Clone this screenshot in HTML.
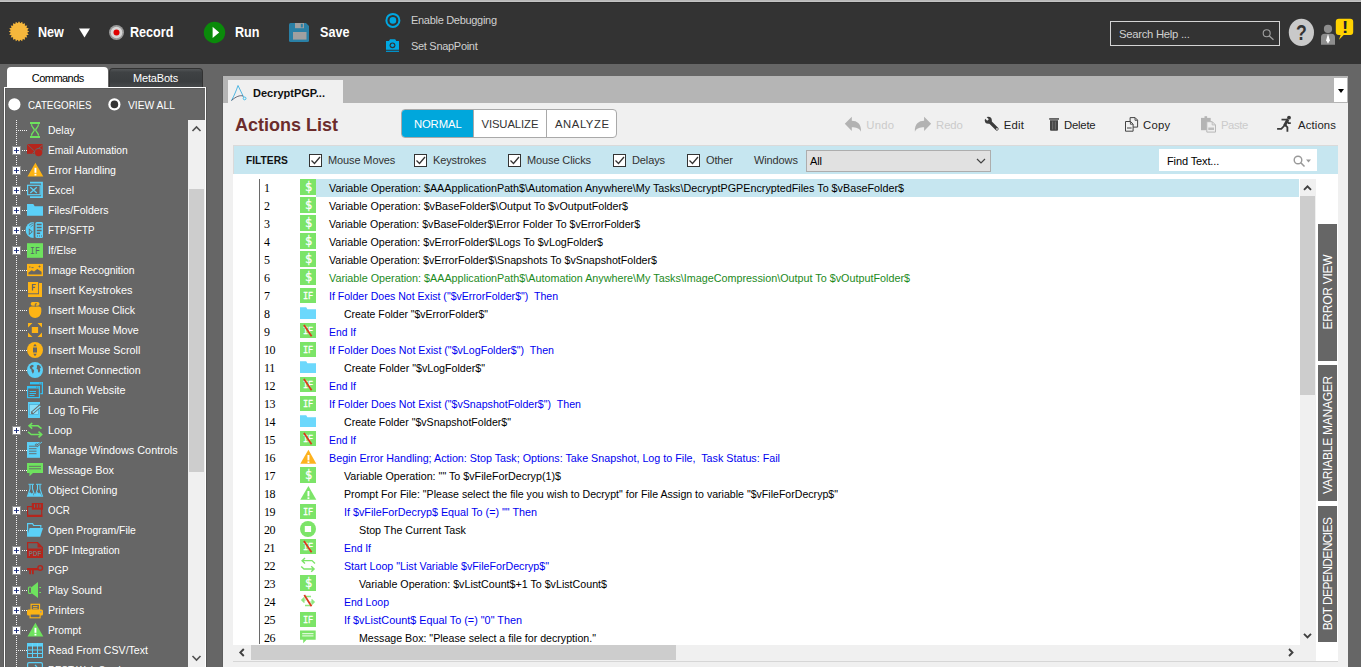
<!DOCTYPE html><html><head><meta charset="utf-8"><title>Automation Anywhere Workbench</title><style>
*{box-sizing:border-box;margin:0;padding:0}
html,body{width:1361px;height:667px;overflow:hidden;background:#666;font-family:"Liberation Sans",sans-serif;}
.a{position:absolute}
#top0{left:0;top:0;width:1361px;height:2px;background:linear-gradient(#b8b8b8 50%,#c4c4c4 50%)}
#bar{left:0;top:2px;width:1361px;height:62px;background:#333;border-top:1px solid #2a2a2a}
.tb{color:#fff;font-weight:bold;font-size:14px;line-height:16px;white-space:nowrap;transform:scaleX(0.9);transform-origin:0 0}
.ts{color:#d0d0d0;font-size:11px;line-height:14px;white-space:nowrap;letter-spacing:-0.3px}
#main{left:223px;top:76px;width:1125px;height:591px;background:#f0f0f0}
#strip{left:223px;top:76px;width:1125px;height:27px;background:#b5b5b5}
#tab{left:228px;top:80px;width:115px;height:23px;background:#f0f0f0}
#tabt{left:253px;top:86.700px;font-size:11px;font-weight:bold;color:#111;line-height:13px;white-space:nowrap}
#dd{left:1334px;top:78px;width:13px;height:24px;background:#fff}
#title{left:235px;top:114px;font-size:18px;font-weight:bold;color:#6b2c2c;line-height:22px;white-space:nowrap}
#seg{left:401px;top:109px;width:216px;height:29px;border:1px solid #a9a9a9;border-radius:4px;background:#fff;overflow:hidden}
.sg{top:0;height:27px;font-size:11.3px;line-height:28px;letter-spacing:-0.1px;text-align:center;color:#333;white-space:nowrap}
.act{font-size:11.3px;line-height:16px;color:#222;white-space:nowrap}
.dis{color:#cbcbcb}
#filt{left:233px;top:145px;width:1105px;height:29px;background:#c6e6f0;border-top:1px solid #dadada;border-left:1px solid #dadada}
.fl{font-size:11px;line-height:13px;color:#333;white-space:nowrap;letter-spacing:-0.12px}
.cb{width:13px;height:13px;background:#fff;border:1px solid #333}
#wrap{left:233px;top:174px;width:1105px;height:487px;background:#fff;border-left:1px solid #dadada}
#list{left:233px;top:174px;width:1067px;height:471px;background:#fff;overflow:hidden}
.row{left:0;height:18px;width:1084px}
.num{left:31px;top:0px;font-family:"Liberation Serif",serif;font-size:12px;letter-spacing:-0.4px;line-height:18px;color:#000}
.ic{left:67px;top:0;width:16px;height:16px}
.tx{top:0px;font-size:11.8px;line-height:18px;white-space:pre;transform-origin:0 0}
.k{color:#000}.b{color:#0000f0}.g{color:#1c8a1c}
#left{left:4px;top:87px;width:202px;height:580px;background:#666;border:1px solid #fff;border-bottom:none}
.ti{left:48px;font-size:11.5px;line-height:16px;color:#fff;white-space:nowrap;transform-origin:0 0}
.tic{left:27px;width:16px;height:16px}
.tic svg{display:block}
.exp{left:12px;width:9px;height:9px;background:#fff;border:1px solid #929292}
.side{left:1318.300px;width:18.900px;background:#666;color:#fff}
.side span{position:absolute;left:9.800px;white-space:nowrap;font-size:12px;line-height:14px;transform:translate(-50%,-50%) rotate(-90deg)}
</style></head><body>
<div class="a" id="top0"></div><div class="a" id="bar"></div>
<svg class="a" style="left:0;top:0" width="420" height="64"><polygon points="29.20,31.50 27.20,32.80 28.70,34.65 26.40,35.27 27.25,37.50 24.87,37.37 25.00,39.75 22.77,38.90 22.15,41.20 20.30,39.70 19.00,41.70 17.70,39.70 15.85,41.20 15.23,38.90 13.00,39.75 13.13,37.37 10.75,37.50 11.60,35.27 9.30,34.65 10.80,32.80 8.80,31.50 10.80,30.20 9.30,28.35 11.60,27.73 10.75,25.50 13.13,25.63 13.00,23.25 15.23,24.10 15.85,21.80 17.70,23.30 19.00,21.30 20.30,23.30 22.15,21.80 22.77,24.10 25.00,23.25 24.87,25.63 27.25,25.50 26.40,27.73 28.70,28.35 27.20,30.20" fill="#f6b73c"/>
<polygon points="79,28.500 90,28.500 84.500,37.500" fill="#fff"/>
<circle cx="116.500" cy="32.500" r="7.500" fill="#9a9a9a"/><circle cx="116.500" cy="32.500" r="5.800" fill="#d6d6d6"/><circle cx="116.500" cy="32.500" r="3" fill="#e00000"/>
<circle cx="214.500" cy="32.500" r="10.700" fill="#0a8a0a"/><polygon points="212.600,26.800 212.600,38 219.200,32.400" fill="#fff"/>
<path d="M290.500 23h15.500l3 3v14.500a1.500 1.500 0 0 1-1.500 1.500h-17a1.500 1.500 0 0 1-1.500-1.500v-16a1.500 1.500 0 0 1 1.500-1.500z" fill="#2a80a6"/><rect x="295" y="23" width="9" height="5.200" fill="#a0a0a0"/><rect x="300.800" y="23.800" width="2" height="3.600" fill="#2a80a6"/><rect x="293" y="32" width="13.500" height="7.600" fill="#a0a0a0"/>
<circle cx="392.900" cy="20.400" r="6.500" fill="none" stroke="#00a8e2" stroke-width="2"/><circle cx="392.900" cy="20.400" r="3.300" fill="#00a8e2"/>
<path d="M386 41h3l1-1.700h5.200l1 1.700H399v8.800H386z" fill="#00a8e2"/><rect x="386" y="50.700" width="13" height="1.300" fill="#0090c8"/><circle cx="392.500" cy="45.300" r="2.900" fill="#333"/><circle cx="392.500" cy="45.300" r="1.700" fill="#00a8e2"/>
</svg>
<div class="a tb" style="left:38px;top:24.300px">New</div>
<div class="a tb" style="left:130px;top:24.300px">Record</div>
<div class="a tb" style="left:235px;top:24.300px">Run</div>
<div class="a tb" style="left:320px;top:24.300px">Save</div>
<div class="a ts" style="left:411px;top:13px">Enable Debugging</div>
<div class="a ts" style="left:411px;top:39px">Set SnapPoint</div>
<div class="a" style="left:1110px;top:21px;width:170px;height:25px;border:1px solid #d4d4d4;background:#333"></div>
<div class="a ts" style="left:1119px;top:27px;font-size:11.300px;letter-spacing:-0.280px">Search Help ...</div>
<svg class="a" style="left:1240px;top:8px" width="121" height="50"><circle cx="26.700" cy="25.300" r="3.500" fill="none" stroke="#a0a0a0" stroke-width="1.100"/><path d="M29.300 27.900L33.500 31.800" stroke="#a0a0a0" stroke-width="1.300"/><ellipse cx="61.400" cy="24.400" rx="12.600" ry="13.600" fill="#c9c9c9"/><circle cx="88" cy="20.900" r="4.100" fill="#8e8e8e"/><path d="M81 36.800v-7.500a3.500 3.500 0 0 1 3.500-3.500h7a3.500 3.500 0 0 1 3.500 3.500v7.500z" fill="#8e8e8e"/><path d="M88 26l1.900 6.200-1.900 3.600-1.900-3.600z" fill="#fff"/><path d="M98.800 10.800h11.400a3 3 0 0 1 3 3v10.200a3 3 0 0 1-3 3h-6.500l-4.700 4.800 1.600-4.800h-1.800a3 3 0 0 1-3-3v-10.200a3 3 0 0 1 3-3z" fill="#ffd200"/></svg>
<div class="a" style="left:1339.500px;top:19.800px;width:10px;height:16px;color:#1c2030;font-weight:bold;font-size:16px;line-height:16px;text-align:center;transform:scaleX(1.150)">!</div>
<div class="a" style="left:1291px;top:19.500px;width:21px;height:26px;color:#333;font-weight:bold;font-size:22px;line-height:26px;text-align:center;transform:scaleX(0.800)">?</div>
<div class="a" style="left:7px;top:67px;width:101px;height:21px;background:#fff;border-radius:4px 4px 0 0"></div>
<div class="a" style="left:109px;top:68px;width:94px;height:19px;background:linear-gradient(#525557 0,#3f4244 18%,#3a3d3f 70%,#46494b);border-radius:4px 4px 0 0;border:1px solid #323232;border-bottom:none"></div>
<div class="a" id="left"></div>
<div class="a" style="left:3px;top:88px;width:1px;height:579px;background:#5b5b5b"></div><div class="a" style="left:206px;top:87px;width:1px;height:580px;background:#565656"></div><div class="a" style="left:5px;top:88px;width:200px;height:1px;background:#5b5b5b"></div><div class="a" style="left:5px;top:88px;width:1px;height:579px;background:#5b5b5b"></div><div class="a" style="left:222px;top:76px;width:1px;height:591px;background:#5e5e5e"></div>
<div class="a" style="left:7px;top:72px;width:101px;text-align:center;font-size:11px;line-height:13px;color:#000;letter-spacing:-0.550px;text-indent:0.500px">Commands</div>
<div class="a" style="left:109px;top:72px;width:93px;text-align:center;font-size:11px;line-height:13px;color:#fff;letter-spacing:-0.180px">MetaBots</div>
<svg class="a" style="left:0;top:90px" width="130" height="30"><circle cx="14.400" cy="14.400" r="6.100" fill="#fff"/><circle cx="114.400" cy="14.400" r="6.100" fill="#fff"/><circle cx="114.400" cy="14.400" r="3.800" fill="#333"/></svg>
<div class="a ti" style="left:27.500px;top:97px;font-size:11.300px;transform:scaleX(0.867)">CATEGORIES</div>
<div class="a ti" style="left:127.500px;top:97px;font-size:11.300px;transform:scaleX(0.912)">VIEW ALL</div>
<div class="a" style="left:188px;top:120px;width:17px;height:547px;background:#f0f0f0"></div>
<div class="a" style="left:189px;top:189px;width:15px;height:283px;background:#cdcdcd"></div>
<svg class="a" style="left:188px;top:120px" width="17" height="17"><path d="M4.500 11L8.500 7l4 4" fill="none" stroke="#505050" stroke-width="1.6"/></svg>
<svg class="a" style="left:188px;top:650px" width="17" height="17"><path d="M4.500 6L8.500 10l4-4" fill="none" stroke="#505050" stroke-width="1.6"/></svg>
<div class="a" style="left:16px;top:120px;width:1px;height:547px;background:repeating-linear-gradient(#f4f4f4 0 1px,transparent 1px 2px)"></div>
<div class="a" style="left:18px;top:130px;width:9px;height:1px;background:repeating-linear-gradient(90deg,#f4f4f4 0 1px,transparent 1px 2px)"></div>
<div class="a tic" style="top:122px"><svg width="17" height="16" viewBox="0 0 17 16" style="overflow:visible"><rect x="3" y="0" width="10" height="2" fill="#6ee25e"/><rect x="3" y="14" width="10" height="2" fill="#6ee25e"/><path d="M4.500 2.200C4.500 5.500 7.300 6.200 7.300 8S4.500 10.500 4.500 13.800M11.500 2.200C11.500 5.500 8.700 6.200 8.700 8S11.500 10.500 11.500 13.800" fill="none" stroke="#6ee25e" stroke-width="1.300"/></svg></div>
<div class="a ti" style="top:122px;transform:scaleX(0.9080)">Delay</div>
<div class="a" style="left:22px;top:150px;width:5px;height:1px;background:repeating-linear-gradient(90deg,#f4f4f4 0 1px,transparent 1px 2px)"></div>
<div class="a exp" style="top:146px"></div><div class="a" style="left:14px;top:150px;width:5px;height:1px;background:#3a4a9c"></div><div class="a" style="left:16px;top:148px;width:1px;height:5px;background:#1c2c70"></div>
<div class="a tic" style="top:142px"><svg width="17" height="16" viewBox="0 0 17 16" style="overflow:visible"><rect x="0" y="2" width="15.600" height="9.800" fill="#b5251c"/><path d="M0.200 2.100L8 9.700M15.600 3L5.300 11.500" stroke="#666" stroke-width="0.900" fill="none"/><circle cx="11.600" cy="10.600" r="4.500" fill="#666"/><circle cx="11.600" cy="10.600" r="3.700" fill="#b5251c"/></svg></div>
<div class="a ti" style="top:142px;transform:scaleX(0.8905)">Email Automation</div>
<div class="a" style="left:22px;top:170px;width:5px;height:1px;background:repeating-linear-gradient(90deg,#f4f4f4 0 1px,transparent 1px 2px)"></div>
<div class="a exp" style="top:166px"></div><div class="a" style="left:14px;top:170px;width:5px;height:1px;background:#3a4a9c"></div><div class="a" style="left:16px;top:168px;width:1px;height:5px;background:#1c2c70"></div>
<div class="a tic" style="top:162px"><svg width="17" height="16" viewBox="0 0 17 16" style="overflow:visible"><path d="M8.400 0.800L16.300 14.600H0.500z" fill="#fdb415"/><rect x="7.500" y="5.800" width="1.900" height="5" fill="#fff"/><rect x="7.500" y="11.800" width="1.900" height="1.700" fill="#fff"/></svg></div>
<div class="a ti" style="top:162px;transform:scaleX(0.9170)">Error Handling</div>
<div class="a" style="left:22px;top:190px;width:5px;height:1px;background:repeating-linear-gradient(90deg,#f4f4f4 0 1px,transparent 1px 2px)"></div>
<div class="a exp" style="top:186px"></div><div class="a" style="left:14px;top:190px;width:5px;height:1px;background:#3a4a9c"></div><div class="a" style="left:16px;top:188px;width:1px;height:5px;background:#1c2c70"></div>
<div class="a tic" style="top:182px"><svg width="17" height="16" viewBox="0 0 17 16" style="overflow:visible"><path d="M3 0.700H15V15.100H3" fill="none" stroke="#5bd0f7" stroke-width="1.800"/><rect x="0.600" y="3.300" width="12.600" height="9.400" fill="#666" stroke="#5bd0f7" stroke-width="1.200"/><path d="M3.300 5.200l6.500 5.800M9.800 5.200l-6.500 5.800" stroke="#5bd0f7" stroke-width="1.300"/></svg></div>
<div class="a ti" style="top:182px;transform:scaleX(0.9244)">Excel</div>
<div class="a" style="left:22px;top:210px;width:5px;height:1px;background:repeating-linear-gradient(90deg,#f4f4f4 0 1px,transparent 1px 2px)"></div>
<div class="a exp" style="top:206px"></div><div class="a" style="left:14px;top:210px;width:5px;height:1px;background:#3a4a9c"></div><div class="a" style="left:16px;top:208px;width:1px;height:5px;background:#1c2c70"></div>
<div class="a tic" style="top:202px"><svg width="17" height="16" viewBox="0 0 17 16" style="overflow:visible"><path d="M0 2h6.300l1.400 2.300H16V13.800H0z" fill="#5bd0f7"/></svg></div>
<div class="a ti" style="top:202px;transform:scaleX(0.9191)">Files/Folders</div>
<div class="a" style="left:22px;top:230px;width:5px;height:1px;background:repeating-linear-gradient(90deg,#f4f4f4 0 1px,transparent 1px 2px)"></div>
<div class="a exp" style="top:226px"></div><div class="a" style="left:14px;top:230px;width:5px;height:1px;background:#3a4a9c"></div><div class="a" style="left:16px;top:228px;width:1px;height:5px;background:#1c2c70"></div>
<div class="a tic" style="top:222px"><svg width="17" height="16" viewBox="0 0 17 16" style="overflow:visible"><path d="M6.600 0A8 8 0 0 0 6.600 16z" fill="#5bd0f7"/><path d="M1.800 6.200v7l4-3.500z" fill="#666"/><path d="M2.700 8v3.400l2-1.700z" fill="#5bd0f7"/><path d="M2 3.500l4-2.500M3.500 5l2.500-2" stroke="#666" stroke-width="0.700"/><rect x="8.400" y="0" width="7.600" height="16" rx="1.500" fill="#5bd0f7"/><path d="M9.800 2.500h4.800M9.800 5.500h4.800M9.800 8.500h4.800" stroke="#666" stroke-width="1.500"/><rect x="9.800" y="10.500" width="3.300" height="1.500" fill="#666"/><path d="M10 14h1M12 14h1M14 14h1" stroke="#666" stroke-width="1"/></svg></div>
<div class="a ti" style="top:222px;transform:scaleX(0.8562)">FTP/SFTP</div>
<div class="a" style="left:22px;top:250px;width:5px;height:1px;background:repeating-linear-gradient(90deg,#f4f4f4 0 1px,transparent 1px 2px)"></div>
<div class="a exp" style="top:246px"></div><div class="a" style="left:14px;top:250px;width:5px;height:1px;background:#3a4a9c"></div><div class="a" style="left:16px;top:248px;width:1px;height:5px;background:#1c2c70"></div>
<div class="a tic" style="top:242px"><svg width="17" height="16" viewBox="0 0 17 16" style="overflow:visible"><rect x="0" y="1.200" width="16" height="14.600" fill="#6ee25e"/><text x="8" y="11.600" font-family="Liberation Mono,monospace" font-size="10" text-anchor="middle" fill="#566" textLength="10" lengthAdjust="spacingAndGlyphs">IF</text></svg></div>
<div class="a ti" style="top:242px;transform:scaleX(0.8915)">If/Else</div>
<div class="a" style="left:18px;top:270px;width:9px;height:1px;background:repeating-linear-gradient(90deg,#f4f4f4 0 1px,transparent 1px 2px)"></div>
<div class="a tic" style="top:262px"><svg width="17" height="16" viewBox="0 0 17 16" style="overflow:visible"><rect x="0" y="1.900" width="16" height="12.200" fill="#fdb415"/><path d="M1.400 12.600V10.500l3.300-2.300 2.300 1.300 3.300-2.600 4.300 2.800v2.900z" fill="#666"/><path d="M2 5h1.500M4.500 5.600h2" stroke="#666" stroke-width="0.900"/><path d="M12.500 3.500v2M11.500 4.500h2" stroke="#666" stroke-width="0.800"/></svg></div>
<div class="a ti" style="top:262px;transform:scaleX(0.9030)">Image Recognition</div>
<div class="a" style="left:18px;top:290px;width:9px;height:1px;background:repeating-linear-gradient(90deg,#f4f4f4 0 1px,transparent 1px 2px)"></div>
<div class="a tic" style="top:282px"><svg width="17" height="16" viewBox="0 0 17 16" style="overflow:visible"><rect x="1" y="0" width="10.200" height="11.300" fill="#fdb415"/><path d="M12 1h3v14H1v-2.800h11z" fill="#fdb415"/><path d="M5.500 8.500V2.500h3.300M5.500 5.300h2.600" stroke="#666" stroke-width="1.200" fill="none"/></svg></div>
<div class="a ti" style="top:282px;transform:scaleX(0.9511)">Insert Keystrokes</div>
<div class="a" style="left:18px;top:310px;width:9px;height:1px;background:repeating-linear-gradient(90deg,#f4f4f4 0 1px,transparent 1px 2px)"></div>
<div class="a tic" style="top:302px"><svg width="17" height="16" viewBox="0 0 17 16" style="overflow:visible"><rect x="3.700" y="0" width="8.800" height="3.700" rx="1.800" fill="#fdb415"/><path d="M1.900 7.300a2.800 2.800 0 0 1 2.800-2.800h6.800a2.800 2.800 0 0 1 2.800 2.800v2.500a6.200 6.200 0 0 1-12.400 0z" fill="#fdb415"/><path d="M8.300 4.600V1.800h1.600" stroke="#666" stroke-width="1" fill="none"/></svg></div>
<div class="a ti" style="top:302px;transform:scaleX(0.9197)">Insert Mouse Click</div>
<div class="a" style="left:18px;top:330px;width:9px;height:1px;background:repeating-linear-gradient(90deg,#f4f4f4 0 1px,transparent 1px 2px)"></div>
<div class="a tic" style="top:322px"><svg width="17" height="16" viewBox="0 0 17 16" style="overflow:visible"><rect x="4.800" y="5" width="6.300" height="6" fill="#fdb415"/><path d="M1 1h4.500L1 5.500zM15 1v4.500L10.500 1zM15 15h-4.500L15 10.500zM1 15v-4.500L5.500 15z" fill="#fdb415"/></svg></div>
<div class="a ti" style="top:322px;transform:scaleX(0.9285)">Insert Mouse Move</div>
<div class="a" style="left:18px;top:350px;width:9px;height:1px;background:repeating-linear-gradient(90deg,#f4f4f4 0 1px,transparent 1px 2px)"></div>
<div class="a tic" style="top:342px"><svg width="17" height="16" viewBox="0 0 17 16" style="overflow:visible"><circle cx="8" cy="8" r="8" fill="#fdb415"/><rect x="6" y="5.500" width="4" height="5" fill="#666"/><path d="M8 1.800l1.800 2.400H6.200zM8 14.200l1.800-2.400H6.200z" fill="#666"/></svg></div>
<div class="a ti" style="top:342px;transform:scaleX(0.9377)">Insert Mouse Scroll</div>
<div class="a" style="left:18px;top:370px;width:9px;height:1px;background:repeating-linear-gradient(90deg,#f4f4f4 0 1px,transparent 1px 2px)"></div>
<div class="a tic" style="top:362px"><svg width="17" height="16" viewBox="0 0 17 16" style="overflow:visible"><circle cx="8" cy="8" r="8" fill="#5bd0f7"/><path d="M2.800 4.200l2.200-1.400 1.700.6-.4 1.500-1.300.6.600 1.600 1.500.8-.3 2.300-1 1.600-1.200-2.600-.2-1.800-1.500-1.200zM9.800 3.500l1.500-.8 2 1.300.7 2-1.200.2.500 2.300-1.200 2.200-1-.8-.2-2.200-1.400-1.200.6-1.500z" fill="#666"/></svg></div>
<div class="a ti" style="top:362px;transform:scaleX(0.9225)">Internet Connection</div>
<div class="a" style="left:18px;top:390px;width:9px;height:1px;background:repeating-linear-gradient(90deg,#f4f4f4 0 1px,transparent 1px 2px)"></div>
<div class="a tic" style="top:382px"><svg width="17" height="16" viewBox="0 0 17 16" style="overflow:visible"><rect x="3" y="0" width="13" height="2.400" fill="#35c0f2"/><path d="M15.400 2v9.600h-2" fill="none" stroke="#35c0f2" stroke-width="1.200"/><rect x="0" y="4" width="13" height="2.500" fill="#35c0f2"/><rect x="0.600" y="4.600" width="11.800" height="11" fill="none" stroke="#35c0f2" stroke-width="1.200"/><path d="M2.500 9.500h6.500M2.500 11.500h6.500M2.500 13.500h5" stroke="#35c0f2" stroke-width="1"/><path d="M9.300 5.200h0.800M10.800 5.200h0.800M12.500 1.200h0.800M14 1.200h0.800" stroke="#666" stroke-width="0.800"/></svg></div>
<div class="a ti" style="top:382px;transform:scaleX(0.9433)">Launch Website</div>
<div class="a" style="left:18px;top:410px;width:9px;height:1px;background:repeating-linear-gradient(90deg,#f4f4f4 0 1px,transparent 1px 2px)"></div>
<div class="a tic" style="top:402px"><svg width="17" height="16" viewBox="0 0 17 16" style="overflow:visible"><rect x="1" y="0" width="12" height="16" fill="#5bd0f7"/><rect x="2.600" y="2.600" width="8.800" height="9.800" fill="#8adff9" stroke="#4aa6cc" stroke-width="0.600"/><path d="M4.800 11.200L14 3.300" stroke="#666" stroke-width="3.200"/><path d="M5.600 10.600L13.300 4" stroke="#8adff9" stroke-width="1.500"/><path d="M3.800 12.300l1-2.200 1.400 1.500z" fill="#666"/></svg></div>
<div class="a ti" style="top:402px;transform:scaleX(0.9046)">Log To File</div>
<div class="a" style="left:22px;top:430px;width:5px;height:1px;background:repeating-linear-gradient(90deg,#f4f4f4 0 1px,transparent 1px 2px)"></div>
<div class="a exp" style="top:426px"></div><div class="a" style="left:14px;top:430px;width:5px;height:1px;background:#3a4a9c"></div><div class="a" style="left:16px;top:428px;width:1px;height:5px;background:#1c2c70"></div>
<div class="a tic" style="top:422px"><svg width="17" height="16" viewBox="0 0 17 16" style="overflow:visible"><path d="M5.200 1L2.100 3.800l3.100 2.800M2.500 3.800H11l3.500 2.900" fill="none" stroke="#6ee25e" stroke-width="1.600"/><path d="M11.500 9.600L14.700 12.500l-3.200 2.900M14.300 12.500H4.200L1 9.900" fill="none" stroke="#6ee25e" stroke-width="1.600"/></svg></div>
<div class="a ti" style="top:422px;transform:scaleX(0.9377)">Loop</div>
<div class="a" style="left:18px;top:450px;width:9px;height:1px;background:repeating-linear-gradient(90deg,#f4f4f4 0 1px,transparent 1px 2px)"></div>
<div class="a tic" style="top:442px"><svg width="17" height="16" viewBox="0 0 17 16" style="overflow:visible"><rect x="0" y="0" width="13" height="15.800" fill="#5bd0f7"/><path d="M2 4.200h7.500M2 6.700h7.500M2 9.200h7.500M2 11.700h7.500" stroke="#666" stroke-width="0.900"/><path d="M8.500 2l1.800 1.700L15 0" fill="none" stroke="#666" stroke-width="2.200"/><path d="M8.500 2l1.800 1.700L15 0" fill="none" stroke="#5bd0f7" stroke-width="0.900"/></svg></div>
<div class="a ti" style="top:442px;transform:scaleX(0.9438)">Manage Windows Controls</div>
<div class="a" style="left:18px;top:470px;width:9px;height:1px;background:repeating-linear-gradient(90deg,#f4f4f4 0 1px,transparent 1px 2px)"></div>
<div class="a tic" style="top:462px"><svg width="17" height="16" viewBox="0 0 17 16" style="overflow:visible"><path d="M0 1h16v10H6l-3.500 3.200V11H0z" fill="#6ee25e"/><path d="M2 4.300h12M2 6.800h12" stroke="#666" stroke-width="0.900"/></svg></div>
<div class="a ti" style="top:462px;transform:scaleX(0.9471)">Message Box</div>
<div class="a" style="left:18px;top:490px;width:9px;height:1px;background:repeating-linear-gradient(90deg,#f4f4f4 0 1px,transparent 1px 2px)"></div>
<div class="a tic" style="top:482px"><svg width="17" height="16" viewBox="0 0 17 16" style="overflow:visible"><path d="M1.500 2.300h5.500M9 2.300h5.500" stroke="#5bd0f7" stroke-width="1"/><path d="M3 2.500v4.500L0.500 14.300h7.500L5.500 7V2.500M10.500 2.500v4.500L8 14.300h7.500L13 7V2.500" fill="none" stroke="#5bd0f7" stroke-width="1.100"/><path d="M1.600 11.500l1.400-1.500 1.500 1.500 1-1 1.500 3.500H0.800zM9.100 11.500l1.400-1.500 1.500 1.500 1-1 1.500 3.500H8.300z" fill="#5bd0f7"/></svg></div>
<div class="a ti" style="top:482px;transform:scaleX(0.9200)">Object Cloning</div>
<div class="a" style="left:22px;top:510px;width:5px;height:1px;background:repeating-linear-gradient(90deg,#f4f4f4 0 1px,transparent 1px 2px)"></div>
<div class="a exp" style="top:506px"></div><div class="a" style="left:14px;top:510px;width:5px;height:1px;background:#3a4a9c"></div><div class="a" style="left:16px;top:508px;width:1px;height:5px;background:#1c2c70"></div>
<div class="a tic" style="top:502px"><svg width="17" height="16" viewBox="0 0 17 16" style="overflow:visible"><rect x="0" y="4" width="15.300" height="11" fill="#b5251c"/><rect x="1.200" y="5.200" width="12.900" height="8.600" fill="#666"/><rect x="0" y="12.500" width="15.300" height="2.500" fill="#b5251c"/><path d="M1.200 12.800l3-2.800 2 1 3-2.500 2.500 1.500 2.400-1v4z" fill="#b5251c" opacity="0"/><path d="M1.200 11.500l3-2 2.200.8 3-2 2.500 1.200 2.200-.8" fill="none" stroke="#b5251c" stroke-width="0"/><rect x="4.800" y="1" width="11.200" height="6.700" fill="#b5251c"/><path d="M7.500 2.300v3.500M10.300 2.300v3.500M13.100 2.300v3.500" stroke="#666" stroke-width="1.100"/><path d="M1.200 12.400l3.200-2.300 2 .7 3-2 2.600 1 2.100-.8v3.400z" fill="#666"/></svg></div>
<div class="a ti" style="top:502px;transform:scaleX(0.8528)">OCR</div>
<div class="a" style="left:18px;top:530px;width:9px;height:1px;background:repeating-linear-gradient(90deg,#f4f4f4 0 1px,transparent 1px 2px)"></div>
<div class="a tic" style="top:522px"><svg width="17" height="16" viewBox="0 0 17 16" style="overflow:visible"><path d="M0.600 14V1.700h5l1 1.800h7.200v2.300" fill="none" stroke="#5bd0f7" stroke-width="1.200"/><path d="M2.600 6H16l-2.800 8.800H0z" fill="#5bd0f7"/></svg></div>
<div class="a ti" style="top:522px;transform:scaleX(0.9037)">Open Program/File</div>
<div class="a" style="left:22px;top:550px;width:5px;height:1px;background:repeating-linear-gradient(90deg,#f4f4f4 0 1px,transparent 1px 2px)"></div>
<div class="a exp" style="top:546px"></div><div class="a" style="left:14px;top:550px;width:5px;height:1px;background:#3a4a9c"></div><div class="a" style="left:16px;top:548px;width:1px;height:5px;background:#1c2c70"></div>
<div class="a tic" style="top:542px"><svg width="17" height="16" viewBox="0 0 17 16" style="overflow:visible"><path d="M0.600 7V0.600h10l4.800 4.800V7" fill="none" stroke="#b5251c" stroke-width="1.200"/><path d="M10.500 0.500v5h5z" fill="#b5251c"/><rect x="0" y="6.500" width="16" height="9.500" fill="#b5251c"/><text x="8" y="14.200" font-family="Liberation Sans,sans-serif" font-weight="bold" font-size="6.500" text-anchor="middle" fill="#777" textLength="12.500" lengthAdjust="spacingAndGlyphs">PDF</text></svg></div>
<div class="a ti" style="top:542px;transform:scaleX(0.8914)">PDF Integration</div>
<div class="a" style="left:22px;top:570px;width:5px;height:1px;background:repeating-linear-gradient(90deg,#f4f4f4 0 1px,transparent 1px 2px)"></div>
<div class="a exp" style="top:566px"></div><div class="a" style="left:14px;top:570px;width:5px;height:1px;background:#3a4a9c"></div><div class="a" style="left:16px;top:568px;width:1px;height:5px;background:#1c2c70"></div>
<div class="a tic" style="top:562px"><svg width="17" height="16" viewBox="0 0 17 16" style="overflow:visible"><circle cx="13.200" cy="5.900" r="2.300" fill="none" stroke="#b5251c" stroke-width="1.400"/><rect x="0" y="6" width="10.900" height="2.300" fill="#b5251c"/><rect x="2.200" y="8" width="1.800" height="4.200" fill="#b5251c"/><rect x="5" y="8" width="1.800" height="4.200" fill="#b5251c"/></svg></div>
<div class="a ti" style="top:562px;transform:scaleX(0.8396)">PGP</div>
<div class="a" style="left:22px;top:590px;width:5px;height:1px;background:repeating-linear-gradient(90deg,#f4f4f4 0 1px,transparent 1px 2px)"></div>
<div class="a exp" style="top:586px"></div><div class="a" style="left:14px;top:590px;width:5px;height:1px;background:#3a4a9c"></div><div class="a" style="left:16px;top:588px;width:1px;height:5px;background:#1c2c70"></div>
<div class="a tic" style="top:582px"><svg width="17" height="16" viewBox="0 0 17 16" style="overflow:visible"><rect x="1.500" y="5" width="3" height="6.400" rx="1" fill="none" stroke="#6ee25e" stroke-width="1.100"/><path d="M5 4.800L11 0v16L5 11.600z" fill="#6ee25e"/><path d="M12.300 5.500h1.700M12.300 10.500h1.700" stroke="#6ee25e" stroke-width="1.100"/></svg></div>
<div class="a ti" style="top:582px;transform:scaleX(0.9145)">Play Sound</div>
<div class="a" style="left:22px;top:610px;width:5px;height:1px;background:repeating-linear-gradient(90deg,#f4f4f4 0 1px,transparent 1px 2px)"></div>
<div class="a exp" style="top:606px"></div><div class="a" style="left:14px;top:610px;width:5px;height:1px;background:#3a4a9c"></div><div class="a" style="left:16px;top:608px;width:1px;height:5px;background:#1c2c70"></div>
<div class="a tic" style="top:602px"><svg width="17" height="16" viewBox="0 0 17 16" style="overflow:visible"><rect x="4.100" y="2.300" width="8.400" height="6" fill="none" stroke="#fdb415" stroke-width="1.200"/><path d="M6 4.500h4.500M6 6.300h4.500" stroke="#fdb415" stroke-width="0.900"/><rect x="0" y="7.600" width="16" height="6" rx="1.500" fill="#fdb415"/><rect x="3.100" y="12" width="10" height="3.800" fill="#666" stroke="#fdb415" stroke-width="1.100"/><rect x="13" y="9" width="1.600" height="1.600" fill="#999"/></svg></div>
<div class="a ti" style="top:602px;transform:scaleX(0.9186)">Printers</div>
<div class="a" style="left:22px;top:630px;width:5px;height:1px;background:repeating-linear-gradient(90deg,#f4f4f4 0 1px,transparent 1px 2px)"></div>
<div class="a exp" style="top:626px"></div><div class="a" style="left:14px;top:630px;width:5px;height:1px;background:#3a4a9c"></div><div class="a" style="left:16px;top:628px;width:1px;height:5px;background:#1c2c70"></div>
<div class="a tic" style="top:622px"><svg width="17" height="16" viewBox="0 0 17 16" style="overflow:visible"><path d="M8.400 0.800L16.300 14.600H0.500z" fill="#6ee25e"/><rect x="7.500" y="5.800" width="1.900" height="5" fill="#fff"/><rect x="7.500" y="11.800" width="1.900" height="1.700" fill="#fff"/></svg></div>
<div class="a ti" style="top:622px;transform:scaleX(0.8900)">Prompt</div>
<div class="a" style="left:18px;top:650px;width:9px;height:1px;background:repeating-linear-gradient(90deg,#f4f4f4 0 1px,transparent 1px 2px)"></div>
<div class="a tic" style="top:642px"><svg width="17" height="16" viewBox="0 0 17 16" style="overflow:visible"><rect x="0" y="1" width="16" height="3.500" fill="#5bd0f7"/><rect x="0.500" y="1.500" width="15" height="14" fill="none" stroke="#5bd0f7" stroke-width="1"/><path d="M0 8h16M0 11.500h16M5.500 4v11M10.500 4v11" stroke="#5bd0f7" stroke-width="1"/><path d="M5.500 1v3.500M10.500 1v3.500" stroke="#7ad8f7" stroke-width="0.600"/></svg></div>
<div class="a ti" style="top:642px;transform:scaleX(0.9203)">Read From CSV/Text</div>
<div class="a" style="left:18px;top:670px;width:9px;height:1px;background:repeating-linear-gradient(90deg,#f4f4f4 0 1px,transparent 1px 2px)"></div>
<div class="a tic" style="top:662px"><svg width="17" height="16" viewBox="0 0 17 16" style="overflow:visible"><rect x="0.600" y="0.600" width="14.800" height="14" rx="1.500" fill="none" stroke="#5bd0f7" stroke-width="1.200"/><path d="M8 3l2 2" stroke="#5bd0f7" stroke-width="1.200"/></svg></div>
<div class="a ti" style="top:662px;transform:scaleX(0.8414)">REST Web Service</div>
<div class="a" id="main"></div><div class="a" id="strip"></div><div class="a" id="tab"></div>
<svg class="a" style="left:230px;top:83px" width="18" height="20" viewBox="0 0 18 20"><path d="M1.500 17.500C4 13 6.500 7 8 2.500L13.700 14.200" fill="none" stroke="#3fb0e0" stroke-width="0.900"/><path d="M1.500 17.500C6 13.500 10 12 13 13" fill="none" stroke="#445" stroke-width="0.800"/><circle cx="14.600" cy="15.400" r="1.400" fill="none" stroke="#35b5e5" stroke-width="0.900"/></svg>
<div class="a" id="tabt">DecryptPGP...</div>
<div class="a" id="dd"></div><svg class="a" style="left:1334px;top:78px" width="13" height="24"><polygon points="4,11 10,11 7,15" fill="#000"/></svg>
<div class="a" id="title">Actions List</div>
<div class="a" id="seg"><div class="a sg" style="left:0;width:70.800px;background:#00a7dc;color:#fff;text-indent:0.700px">NORMAL</div><div class="a sg" style="left:70.800px;width:73.200px;border-left:1px solid #a9a9a9">VISUALIZE</div><div class="a sg" style="left:144px;width:71px;border-left:1px solid #a9a9a9;letter-spacing:0.550px;text-indent:0.500px">ANALYZE</div></div>
<div class="a act dis" style="left:866.2px;top:117px;letter-spacing:0.29px">Undo</div>
<div class="a act dis" style="left:936.1px;top:117px;letter-spacing:-0.11px">Redo</div>
<div class="a act" style="left:1003.7px;top:117px;letter-spacing:0.21px">Edit</div>
<div class="a act" style="left:1064.1px;top:117px;letter-spacing:-0.23px">Delete</div>
<div class="a act" style="left:1143.0px;top:117px;letter-spacing:0.24px">Copy</div>
<div class="a act dis" style="left:1220.9px;top:117px;letter-spacing:-0.35px">Paste</div>
<div class="a act" style="left:1298.1px;top:117px;letter-spacing:0.13px">Actions</div>
<svg class="a" style="left:840px;top:112px" width="500" height="26"><path d="M4.800 11.800L11.800 4.800V8.800C17 8.800 21.500 12 21 19.800C19.500 16 16 15.200 11.800 15.200V19.100Z" fill="#b2b2b2"/><path d="M91.100 11.800L84.100 4.800V8.800C78.900 8.800 74.400 12 74.900 19.800C76.400 16 79.900 15.200 84.100 15.200V19.100Z" fill="#b2b2b2"/><path d="M149.600 9.600L156.900 16.900" stroke="#3c3c3c" stroke-width="3.400" stroke-linecap="round"/><circle cx="148.300" cy="8.300" r="3.500" fill="#3c3c3c"/><path d="M148 8L144 4" stroke="#f0f0f0" stroke-width="2.300"/><circle cx="157" cy="17" r="0.900" fill="#ddd"/><rect x="209.200" y="6.200" width="9.800" height="1.500" fill="#444"/><path d="M210 8.300h8v9.400a1 1 0 0 1-1 1h-6a1 1 0 0 1-1-1z" fill="#444"/><path d="M212.700 9.500v8M215.300 9.500v8" stroke="#777" stroke-width="0.900"/><path d="M290.100 5.600h5l2.500 2.500v7h-7.500z" fill="#f0f0f0" stroke="#444" stroke-width="1"/><path d="M295 5.800v2.500h2.400" fill="none" stroke="#444" stroke-width="0.900"/><path d="M285.500 9.500h5l2.600 2.500v7.200h-7.600z" fill="#f0f0f0" stroke="#444" stroke-width="1"/><path d="M290.400 9.700v2.500h2.500" fill="none" stroke="#444" stroke-width="0.900"/><rect x="287" y="15" width="4.600" height="2" fill="#999"/><rect x="361" y="5.900" width="9.700" height="12.300" fill="#b4b4b4"/><rect x="364.500" y="4.200" width="2.600" height="2" fill="#b4b4b4"/><path d="M366.800 9.700h5.500l3.200 3.200v7.200h-8.700z" fill="#eee" stroke="#b8b8b8" stroke-width="1"/><path d="M372.200 9.900v3h3" fill="none" stroke="#b8b8b8" stroke-width="0.900"/><rect x="368.300" y="15.500" width="5.700" height="2.500" fill="#bdbdbd"/><circle cx="449" cy="5.700" r="1.900" fill="#3a3a3a"/><path d="M441.500 7.600h6.300" fill="none" stroke="#3a3a3a" stroke-width="1.700"/><path d="M448 7.300L444.300 14" fill="none" stroke="#3a3a3a" stroke-width="2.800"/><path d="M444.500 13.500l-3.200 3.400h-4.200M447.300 9.500l1.200 1.600h2.300M445 12.500l2.400 2.800v4.400" fill="none" stroke="#3a3a3a" stroke-width="1.800"/></svg>
<div class="a" id="filt"></div>
<div class="a" style="left:246.300px;top:154px;font-size:11px;font-weight:bold;color:#111;line-height:13px;white-space:nowrap;transform:scaleX(0.930);transform-origin:0 0">FILTERS</div>
<div class="a cb" style="left:309px;top:154px"></div><svg class="a" style="left:309px;top:154px" width="13" height="13"><path d="M2.500 6.500l3 3 5.500-6.500" fill="none" stroke="#333" stroke-width="1.300"/></svg>
<div class="a fl" style="left:328px;top:154px">Mouse Moves</div>
<div class="a cb" style="left:414px;top:154px"></div><svg class="a" style="left:414px;top:154px" width="13" height="13"><path d="M2.500 6.500l3 3 5.500-6.500" fill="none" stroke="#333" stroke-width="1.300"/></svg>
<div class="a fl" style="left:433px;top:154px">Keystrokes</div>
<div class="a cb" style="left:508px;top:154px"></div><svg class="a" style="left:508px;top:154px" width="13" height="13"><path d="M2.500 6.500l3 3 5.500-6.500" fill="none" stroke="#333" stroke-width="1.300"/></svg>
<div class="a fl" style="left:527px;top:154px">Mouse Clicks</div>
<div class="a cb" style="left:613px;top:154px"></div><svg class="a" style="left:613px;top:154px" width="13" height="13"><path d="M2.500 6.500l3 3 5.500-6.500" fill="none" stroke="#333" stroke-width="1.300"/></svg>
<div class="a fl" style="left:632px;top:154px">Delays</div>
<div class="a cb" style="left:687px;top:154px"></div><svg class="a" style="left:687px;top:154px" width="13" height="13"><path d="M2.500 6.500l3 3 5.500-6.500" fill="none" stroke="#333" stroke-width="1.300"/></svg>
<div class="a fl" style="left:706px;top:154px">Other</div>
<div class="a fl" style="left:754px;top:154px">Windows</div>
<div class="a" style="left:806px;top:150px;width:185px;height:22px;background:#e1e1e1;border:1px solid #adadad"></div>
<div class="a fl" style="left:810px;top:155px;color:#000">All</div>
<svg class="a" style="left:974px;top:155px" width="14" height="12"><path d="M3 4l4 4 4-4" fill="none" stroke="#444" stroke-width="1.200"/></svg>
<div class="a" style="left:1159px;top:149px;width:158px;height:22px;background:#fff"></div>
<div class="a fl" style="left:1167px;top:155px;color:#000">Find Text...</div>
<svg class="a" style="left:1290px;top:153px" width="24" height="16"><circle cx="8" cy="7" r="3.800" fill="none" stroke="#999" stroke-width="1.400"/><path d="M10.800 9.800l3.700 3.700" stroke="#999" stroke-width="1.600"/><polygon points="16,6.500 21,6.500 18.500,9.500" fill="#999"/></svg>
<div class="a" id="wrap"></div><div class="a" id="list">
<div class="a" style="left:26px;top:5px;width:1px;height:465px;background:#6a6a6a"></div>
<div class="a row" style="top:5px"><div class="a" style="left:83px;top:0;width:983px;height:18px;background:#c6e6f0"></div><div class="a num">1</div><div class="a ic"><svg width="16" height="16" viewBox="0 0 16 16"><rect width="16" height="16" fill="#7ce468"/><text x="8.600" y="12.300" font-family="DejaVu Sans Mono,monospace" font-size="12" text-anchor="middle" fill="#fff" stroke="#fff" stroke-width="0.300">$</text></svg></div><div class="a tx k" style="left:96px;transform:translateY(0.45px) scaleX(0.9125)">Variable Operation: $AAApplicationPath$\Automation Anywhere\My Tasks\DecryptPGPEncryptedFiles To $vBaseFolder$</div></div>
<div class="a row" style="top:23px"><div class="a num">2</div><div class="a ic"><svg width="16" height="16" viewBox="0 0 16 16"><rect width="16" height="16" fill="#7ce468"/><text x="8.600" y="12.300" font-family="DejaVu Sans Mono,monospace" font-size="12" text-anchor="middle" fill="#fff" stroke="#fff" stroke-width="0.300">$</text></svg></div><div class="a tx k" style="left:96px;transform:translateY(0.45px) scaleX(0.9095)">Variable Operation: $vBaseFolder$\Output To $vOutputFolder$</div></div>
<div class="a row" style="top:41px"><div class="a num">3</div><div class="a ic"><svg width="16" height="16" viewBox="0 0 16 16"><rect width="16" height="16" fill="#7ce468"/><text x="8.600" y="12.300" font-family="DejaVu Sans Mono,monospace" font-size="12" text-anchor="middle" fill="#fff" stroke="#fff" stroke-width="0.300">$</text></svg></div><div class="a tx k" style="left:96px;transform:translateY(0.45px) scaleX(0.8961)">Variable Operation: $vBaseFolder$\Error Folder To $vErrorFolder$</div></div>
<div class="a row" style="top:59px"><div class="a num">4</div><div class="a ic"><svg width="16" height="16" viewBox="0 0 16 16"><rect width="16" height="16" fill="#7ce468"/><text x="8.600" y="12.300" font-family="DejaVu Sans Mono,monospace" font-size="12" text-anchor="middle" fill="#fff" stroke="#fff" stroke-width="0.300">$</text></svg></div><div class="a tx k" style="left:96px;transform:translateY(0.45px) scaleX(0.9057)">Variable Operation: $vErrorFolder$\Logs To $vLogFolder$</div></div>
<div class="a row" style="top:77px"><div class="a num">5</div><div class="a ic"><svg width="16" height="16" viewBox="0 0 16 16"><rect width="16" height="16" fill="#7ce468"/><text x="8.600" y="12.300" font-family="DejaVu Sans Mono,monospace" font-size="12" text-anchor="middle" fill="#fff" stroke="#fff" stroke-width="0.300">$</text></svg></div><div class="a tx k" style="left:96px;transform:translateY(0.45px) scaleX(0.9039)">Variable Operation: $vErrorFolder$\Snapshots To $vSnapshotFolder$</div></div>
<div class="a row" style="top:95px"><div class="a num">6</div><div class="a ic"><svg width="16" height="16" viewBox="0 0 16 16"><rect width="16" height="16" fill="#7ce468"/><text x="8.600" y="12.300" font-family="DejaVu Sans Mono,monospace" font-size="12" text-anchor="middle" fill="#fff" stroke="#fff" stroke-width="0.300">$</text></svg></div><div class="a tx g" style="left:96px;transform:translateY(0.45px) scaleX(0.9134)">Variable Operation: $AAApplicationPath$\Automation Anywhere\My Tasks\ImageCompression\Output To $vOutputFolder$</div></div>
<div class="a row" style="top:113px"><div class="a num">7</div><div class="a ic"><svg width="16" height="16" viewBox="0 0 16 16"><rect y="1" width="16" height="15" fill="#7ce468"/><text x="8.100" y="11.900" font-family="Liberation Mono,monospace" font-size="10.500" text-anchor="middle" fill="#fff" stroke="#fff" stroke-width="0.300" textLength="10.400" lengthAdjust="spacingAndGlyphs">IF</text></svg></div><div class="a tx b" style="left:96px;transform:translateY(0.45px) scaleX(0.8946)">If Folder Does Not Exist ("$vErrorFolder$")  Then</div></div>
<div class="a row" style="top:131px"><div class="a num">8</div><div class="a ic"><svg width="16" height="16" viewBox="0 0 16 16"><path d="M0 2.200h6.200l1.200 2.100H16V13.900H0z" fill="#6cd8fc"/></svg></div><div class="a tx k" style="left:111px;transform:translateY(0.45px) scaleX(0.8864)">Create Folder "$vErrorFolder$"</div></div>
<div class="a row" style="top:149px"><div class="a num">9</div><div class="a ic"><svg width="16" height="16" viewBox="0 0 16 16"><rect y="0" width="16" height="15" fill="#7ce468"/><text x="8.100" y="10.900" font-family="Liberation Mono,monospace" font-size="10.500" text-anchor="middle" fill="#fff" stroke="#fff" stroke-width="0.300" textLength="10.400" lengthAdjust="spacingAndGlyphs">IF</text><path d="M3.900 1.900L11.600 13.200" stroke="#d8391c" stroke-width="1.800"/></svg></div><div class="a tx b" style="left:96px;transform:translateY(0.45px) scaleX(0.8758)">End If</div></div>
<div class="a row" style="top:167px"><div class="a num">10</div><div class="a ic"><svg width="16" height="16" viewBox="0 0 16 16"><rect y="1" width="16" height="15" fill="#7ce468"/><text x="8.100" y="11.900" font-family="Liberation Mono,monospace" font-size="10.500" text-anchor="middle" fill="#fff" stroke="#fff" stroke-width="0.300" textLength="10.400" lengthAdjust="spacingAndGlyphs">IF</text></svg></div><div class="a tx b" style="left:96px;transform:translateY(0.45px) scaleX(0.9020)">If Folder Does Not Exist ("$vLogFolder$")  Then</div></div>
<div class="a row" style="top:185px"><div class="a num">11</div><div class="a ic"><svg width="16" height="16" viewBox="0 0 16 16"><path d="M0 2.200h6.200l1.200 2.100H16V13.900H0z" fill="#6cd8fc"/></svg></div><div class="a tx k" style="left:111px;transform:translateY(0.45px) scaleX(0.9043)">Create Folder "$vLogFolder$"</div></div>
<div class="a row" style="top:203px"><div class="a num">12</div><div class="a ic"><svg width="16" height="16" viewBox="0 0 16 16"><rect y="0" width="16" height="15" fill="#7ce468"/><text x="8.100" y="10.900" font-family="Liberation Mono,monospace" font-size="10.500" text-anchor="middle" fill="#fff" stroke="#fff" stroke-width="0.300" textLength="10.400" lengthAdjust="spacingAndGlyphs">IF</text><path d="M3.900 1.900L11.600 13.200" stroke="#d8391c" stroke-width="1.800"/></svg></div><div class="a tx b" style="left:96px;transform:translateY(0.45px) scaleX(0.8758)">End If</div></div>
<div class="a row" style="top:221px"><div class="a num">13</div><div class="a ic"><svg width="16" height="16" viewBox="0 0 16 16"><rect y="1" width="16" height="15" fill="#7ce468"/><text x="8.100" y="11.900" font-family="Liberation Mono,monospace" font-size="10.500" text-anchor="middle" fill="#fff" stroke="#fff" stroke-width="0.300" textLength="10.400" lengthAdjust="spacingAndGlyphs">IF</text></svg></div><div class="a tx b" style="left:96px;transform:translateY(0.45px) scaleX(0.9012)">If Folder Does Not Exist ("$vSnapshotFolder$")  Then</div></div>
<div class="a row" style="top:239px"><div class="a num">14</div><div class="a ic"><svg width="16" height="16" viewBox="0 0 16 16"><path d="M0 2.200h6.200l1.200 2.100H16V13.900H0z" fill="#6cd8fc"/></svg></div><div class="a tx k" style="left:111px;transform:translateY(0.45px) scaleX(0.8974)">Create Folder "$vSnapshotFolder$"</div></div>
<div class="a row" style="top:257px"><div class="a num">15</div><div class="a ic"><svg width="16" height="16" viewBox="0 0 16 16"><rect y="0" width="16" height="15" fill="#7ce468"/><text x="8.100" y="10.900" font-family="Liberation Mono,monospace" font-size="10.500" text-anchor="middle" fill="#fff" stroke="#fff" stroke-width="0.300" textLength="10.400" lengthAdjust="spacingAndGlyphs">IF</text><path d="M3.900 1.900L11.600 13.200" stroke="#d8391c" stroke-width="1.800"/></svg></div><div class="a tx b" style="left:96px;transform:translateY(0.45px) scaleX(0.8758)">End If</div></div>
<div class="a row" style="top:275px"><div class="a num">16</div><div class="a ic"><svg width="17" height="16" viewBox="0 0 17 16"><path d="M8.400 0.700L16.300 14.800H0.300z" fill="#fdb21e"/><rect x="7.500" y="6" width="1.900" height="5.400" fill="#fff"/><rect x="7.500" y="12.300" width="1.900" height="1.700" fill="#fff"/></svg></div><div class="a tx b" style="left:96px;transform:translateY(0.45px) scaleX(0.9097)">Begin Error Handling; Action: Stop Task; Options: Take Snapshot, Log to File,  Task Status: Fail</div></div>
<div class="a row" style="top:293px"><div class="a num">17</div><div class="a ic"><svg width="16" height="16" viewBox="0 0 16 16"><rect width="16" height="16" fill="#7ce468"/><text x="8.600" y="12.300" font-family="DejaVu Sans Mono,monospace" font-size="12" text-anchor="middle" fill="#fff" stroke="#fff" stroke-width="0.300">$</text></svg></div><div class="a tx k" style="left:111px;transform:translateY(0.45px) scaleX(0.9090)">Variable Operation: "" To $vFileForDecryp(1)$</div></div>
<div class="a row" style="top:311px"><div class="a num">18</div><div class="a ic"><svg width="17" height="16" viewBox="0 0 17 16"><path d="M8.400 0.900L16.300 14.800H0.300z" fill="#7ce468"/><rect x="7.500" y="6" width="1.900" height="5.400" fill="#fff"/><rect x="7.500" y="12.300" width="1.900" height="1.700" fill="#fff"/></svg></div><div class="a tx k" style="left:111px;transform:translateY(0.45px) scaleX(0.8974)">Prompt For File: "Please select the file you wish to Decrypt" for File Assign to variable "$vFileForDecryp$"</div></div>
<div class="a row" style="top:329px"><div class="a num">19</div><div class="a ic"><svg width="16" height="16" viewBox="0 0 16 16"><rect y="1" width="16" height="15" fill="#7ce468"/><text x="8.100" y="11.900" font-family="Liberation Mono,monospace" font-size="10.500" text-anchor="middle" fill="#fff" stroke="#fff" stroke-width="0.300" textLength="10.400" lengthAdjust="spacingAndGlyphs">IF</text></svg></div><div class="a tx b" style="left:111px;transform:translateY(0.45px) scaleX(0.9124)">If $vFileForDecryp$ Equal To (=) "" Then</div></div>
<div class="a row" style="top:347px"><div class="a num">20</div><div class="a ic"><svg width="16" height="16" viewBox="0 0 16 16"><circle cx="8" cy="8" r="8" fill="#7ce468"/><rect x="4.800" y="5" width="6.300" height="6" fill="#fff"/></svg></div><div class="a tx k" style="left:126px;transform:translateY(0.45px) scaleX(0.9098)">Stop The Current Task</div></div>
<div class="a row" style="top:365px"><div class="a num">21</div><div class="a ic"><svg width="16" height="16" viewBox="0 0 16 16"><rect y="0" width="16" height="15" fill="#7ce468"/><text x="8.100" y="10.900" font-family="Liberation Mono,monospace" font-size="10.500" text-anchor="middle" fill="#fff" stroke="#fff" stroke-width="0.300" textLength="10.400" lengthAdjust="spacingAndGlyphs">IF</text><path d="M3.900 1.900L11.600 13.200" stroke="#d8391c" stroke-width="1.800"/></svg></div><div class="a tx b" style="left:111px;transform:translateY(0.45px) scaleX(0.8758)">End If</div></div>
<div class="a row" style="top:383px"><div class="a num">22</div><div class="a ic"><svg width="16" height="16" viewBox="0 0 16 16"><path d="M5 1L2.100 3.700 5 6.400M2.500 3.600H12l3 2.900" fill="none" stroke="#7ce468" stroke-width="1.400"/><path d="M11.200 9.200L14.100 12l-2.900 2.800M14 12H4L1.200 9.500" fill="none" stroke="#7ce468" stroke-width="1.400"/></svg></div><div class="a tx b" style="left:111px;transform:translateY(0.45px) scaleX(0.9051)">Start Loop "List Variable $vFileForDecryp$"</div></div>
<div class="a row" style="top:401px"><div class="a num">23</div><div class="a ic"><svg width="16" height="16" viewBox="0 0 16 16"><rect width="16" height="16" fill="#7ce468"/><text x="8.600" y="12.300" font-family="DejaVu Sans Mono,monospace" font-size="12" text-anchor="middle" fill="#fff" stroke="#fff" stroke-width="0.300">$</text></svg></div><div class="a tx k" style="left:126px;transform:translateY(0.45px) scaleX(0.9051)">Variable Operation: $vListCount$+1 To $vListCount$</div></div>
<div class="a row" style="top:419px"><div class="a num">24</div><div class="a ic"><svg width="16" height="16" viewBox="0 0 16 16"><g opacity="0.850"><path d="M4.500 4.500L2 7l2.500 2.500M2.500 7h3M11.500 6.500L14 9l-2.500 2.500M13.500 9h-3M6 3.500h5M5 12.500h5" fill="none" stroke="#7ce468" stroke-width="1.600"/></g><path d="M4.300 1.900L11.500 13.200" stroke="#d8391c" stroke-width="1.800"/></svg></div><div class="a tx b" style="left:111px;transform:translateY(0.45px) scaleX(0.8908)">End Loop</div></div>
<div class="a row" style="top:437px"><div class="a num">25</div><div class="a ic"><svg width="16" height="16" viewBox="0 0 16 16"><rect y="1" width="16" height="15" fill="#7ce468"/><text x="8.100" y="11.900" font-family="Liberation Mono,monospace" font-size="10.500" text-anchor="middle" fill="#fff" stroke="#fff" stroke-width="0.300" textLength="10.400" lengthAdjust="spacingAndGlyphs">IF</text></svg></div><div class="a tx b" style="left:111px;transform:translateY(0.45px) scaleX(0.9182)">If $vListCount$ Equal To (=) "0" Then</div></div>
<div class="a row" style="top:455px"><div class="a num">26</div><div class="a ic"><svg width="16" height="16" viewBox="0 0 16 16"><path d="M0 1.400h15.700v9.400H6.500l-3.300 3.400v-3.400H0z" fill="#7ce468"/><path d="M2.200 4.700h11.300M2.200 6.900h11.300" stroke="#fff" stroke-width="0.900"/></svg></div><div class="a tx k" style="left:126px;transform:translateY(0.45px) scaleX(0.9018)">Message Box: "Please select a file for decryption."</div></div>
</div>
<div class="a" style="left:1300px;top:179px;width:16px;height:482px;background:#f0f0f0"></div>
<div class="a" style="left:1300px;top:196px;width:15px;height:199px;background:#cdcdcd"></div>
<svg class="a" style="left:1300px;top:179px" width="16" height="17"><path d="M4 10.800L7.500 7.300l3.500 3.500" fill="none" stroke="#404040" stroke-width="1.900"/></svg>
<svg class="a" style="left:1300px;top:627px" width="16" height="17"><path d="M4 6.800L7.500 10.300l3.500-3.500" fill="none" stroke="#404040" stroke-width="1.900"/></svg>
<div class="a" style="left:233px;top:645px;width:1083px;height:16px;background:#f0f0f0"></div>
<div class="a" style="left:251px;top:645px;width:425px;height:15px;background:#cdcdcd"></div>
<div class="a" style="left:233px;top:661px;width:1105px;height:1px;background:#d6d6d6"></div>
<svg class="a" style="left:233px;top:644px" width="18" height="17"><path d="M10.800 5L7.300 8.500l3.500 3.500" fill="none" stroke="#404040" stroke-width="1.900"/></svg>
<svg class="a" style="left:1282px;top:644px" width="17" height="17"><path d="M7 5L10.500 8.500l-3.500 3.500" fill="none" stroke="#404040" stroke-width="1.900"/></svg>
<div class="a side" style="top:224.2px;height:136.4px"><span style="top:67.8px;letter-spacing:-0.26px;margin-left:0.00px">ERROR VIEW</span></div>
<div class="a side" style="top:365.0px;height:135.8px"><span style="top:69.5px;letter-spacing:-0.24px;margin-left:0.00px">VARIABLE MANAGER</span></div>
<div class="a side" style="top:505.7px;height:136.8px"><span style="top:68.8px;letter-spacing:-0.61px;margin-left:0.00px">BOT DEPENDENCIES</span></div>
</body></html>
